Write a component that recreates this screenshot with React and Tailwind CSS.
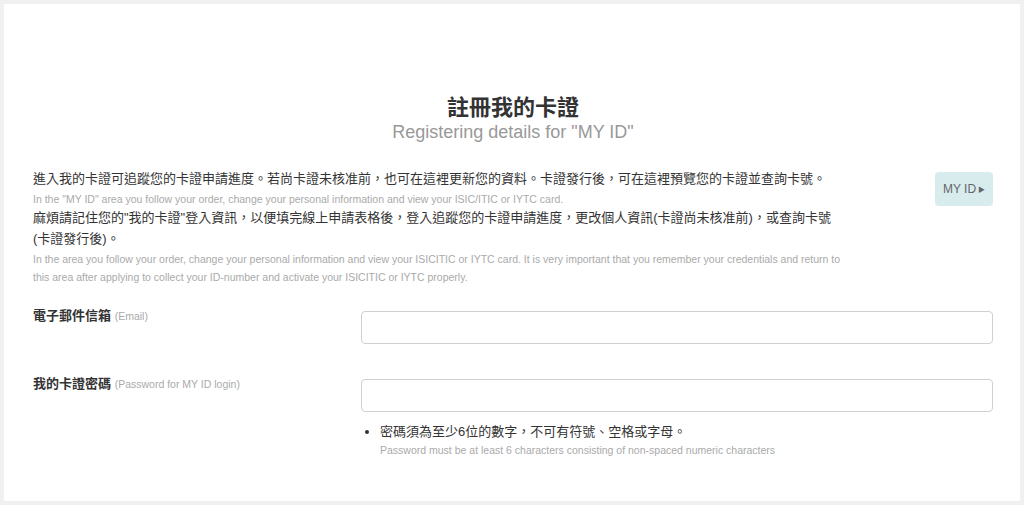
export default function App() {
  const font = { fontFamily: '"Liberation Sans", "Noto Sans CJK TC", Arial, sans-serif' };
  return (
    <div className="h-[505px] bg-[#f0f0f0] p-1" style={font}>
      <div className="h-full bg-white pl-[29px] pr-[27px] text-[#333]">
        <div className="pt-[91px] text-center">
          <h1 className="text-[22px] font-bold leading-[26px] text-[#333]">註冊我的卡證</h1>
          <p className="text-[18px] leading-[22px] text-[#999]">Registering details for "MY ID"</p>
        </div>

        <div className="mt-[27px] flex items-start">
          <div className="w-[830px]">
            <p className="text-[13px] leading-[18px]">
              進入我的卡證可追蹤您的卡證申請進度。若尚卡證未核准前，也可在這裡更新您的資料。卡證發行後，可在這裡預覽您的卡證並查詢卡號。
            </p>
            <p className="mt-[2px] text-[10.5px] leading-[18px] text-[#aaa]">
              In the "MY ID" area you follow your order, change your personal information and view your ISIC/ITIC or IYTC card.
            </p>
            <p className="-mt-[1px] text-[13px] leading-[21px]">
              麻煩請記住您的"我的卡證"登入資訊，以便填完線上申請表格後，登入追蹤您的卡證申請進度，更改個人資訊(卡證尚未核准前)，或查詢卡號
              <br />
              (卡證發行後)。
            </p>
            <p className="mt-[1px] w-[816px] text-[10.5px] leading-[18px] text-[#aaa]">
              In the area you follow your order, change your personal information and view your ISICITIC or IYTC card. It is very important that you remember your credentials and return to this area after applying to collect your ID-number and activate your ISICITIC or IYTC properly.
            </p>
          </div>
          <button className="ml-auto mt-[2px] flex h-[34px] w-[58px] items-center justify-center gap-[2px] rounded-[4px] bg-[#d8ecee] text-[12px] text-[#666]">
            MY ID
            <span className="text-[7px] leading-none">▶</span>
          </button>
        </div>

        <div className="mt-[25px] flex items-start">
          <div className="-mt-[2px] w-[328px] text-[13px] leading-[14px]">
            <span className="font-bold">電子郵件信箱</span>{' '}
            <span className="text-[10.5px] text-[#aaa]">(Email)</span>
          </div>
          <input type="text" className="h-[33px] flex-1 rounded-[4px] border border-[#d0d0d0] bg-white outline-none" />
        </div>

        <div className="mt-[35px] flex items-start">
          <div className="-mt-[2px] w-[328px] text-[13px] leading-[14px]">
            <span className="font-bold">我的卡證密碼</span>{' '}
            <span className="text-[10.5px] text-[#aaa]">(Password for MY ID login)</span>
          </div>
          <div className="flex-1">
            <input type="password" className="block h-[33px] w-full rounded-[4px] border border-[#d0d0d0] bg-white outline-none" />
            <ul className="mt-[10px] pl-[19px]">
              <li className="list-disc text-[13px] leading-[20px] marker:text-[#333]">
                密碼須為至少6位的數字，不可有符號、空格或字母。
                <p className="mt-[1px] text-[10.5px] leading-[14px] text-[#aaa]">
                  Password must be at least 6 characters consisting of non-spaced numeric characters
                </p>
              </li>
            </ul>
          </div>
        </div>
      </div>
    </div>
  );
}
